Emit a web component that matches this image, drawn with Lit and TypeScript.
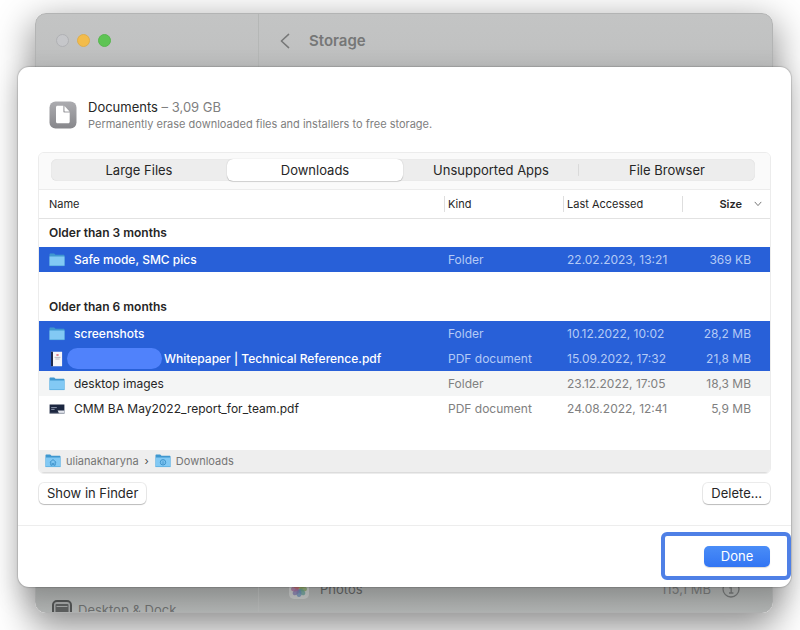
import { LitElement, html, css, svg, nothing } from "lit";
import { customElement, state } from "lit/decorators.js";
import { classMap } from "lit/directives/class-map.js";

type IconName = "folder" | "paper" | "slide";

interface FileItem {
  id: string;
  name: string;
  icon: IconName;
  kind: string;
  accessed: string;
  size: string;
  redacted?: boolean;
}

interface Group {
  title: string;
  items: FileItem[];
}

const TABS = ["Large Files", "Downloads", "Unsupported Apps", "File Browser"];

const GROUPS: Group[] = [
  {
    title: "Older than 3 months",
    items: [
      { id: "safe", name: "Safe mode, SMC pics", icon: "folder", kind: "Folder", accessed: "22.02.2023, 13:21", size: "369 KB" },
    ],
  },
  {
    title: "Older than 6 months",
    items: [
      { id: "shots", name: "screenshots", icon: "folder", kind: "Folder", accessed: "10.12.2022, 10:02", size: "28,2 MB" },
      { id: "white", name: "Whitepaper | Technical Reference.pdf", icon: "paper", kind: "PDF document", accessed: "15.09.2022, 17:32", size: "21,8 MB", redacted: true },
      { id: "desk", name: "desktop images", icon: "folder", kind: "Folder", accessed: "23.12.2022, 17:05", size: "18,3 MB" },
      { id: "cmm", name: "CMM BA May2022_report_for_team.pdf", icon: "slide", kind: "PDF document", accessed: "24.08.2022, 12:41", size: "5,9 MB" },
    ],
  },
];

const folder = (mark: unknown = nothing) => html`
  <svg class="icon" width="16" height="16" viewBox="0 0 16 16" aria-hidden="true">
    <path d="M.5 2.6c0-.6.4-1 1-1h3.7l1.3 1.2h8c.6 0 1 .4 1 1V13c0 .6-.4 1-1 1h-13c-.6 0-1-.4-1-1z" fill="#3f97cf" />
    <path d="M.5 4.6h15V13c0 .6-.4 1-1 1h-13c-.6 0-1-.4-1-1z" fill="#82c9f4" />
    <path d="M.6 13.6h14.8" stroke="#5aaee0" stroke-width=".8" />
    ${mark}
  </svg>
`;

const homeMark = svg`<path d="M4.8 9.4 8 6.6l3.2 2.8M5.8 9v3.2h1.5v-1.8h1.4v1.8h1.5V9" fill="none" stroke="#3f93cb" stroke-width="1" />`;
const downMark = svg`<circle cx="8" cy="9.3" r="2.7" fill="none" stroke="#3f93cb" stroke-width="1" /><path d="M8 7.8v2.6M7 9.6l1 1 1-1" fill="none" stroke="#3f93cb" stroke-width=".8" />`;

const paper = html`
  <svg class="icon" width="16" height="16" viewBox="0 0 16 16" aria-hidden="true">
    <path d="M2.2.8h10.9v14.4H2.2z" fill="#f7f6f8" />
    <path d="M2 .8h2v14.4H2z" fill="#1f2a4c" />
    <path d="M7.4 3.2h2.2v1.6H7.4z" fill="#d5606e" />
    <path d="M5.6 6.4h5.8M6.4 8h4.2" stroke="#a9abb8" stroke-width=".8" />
  </svg>
`;

const slide = html`
  <svg class="icon" width="16" height="16" viewBox="0 0 16 16" aria-hidden="true">
    <path d="M.6 3.5h14.8v9H.6z" fill="#1c2740" />
    <path d="M10 12.5 8.6 9.6h6.8v2.9z" fill="#e4e7ee" />
    <path d="M2.2 6.6h5.6M2.2 8.4h3.4" stroke="#9aa3b8" stroke-width=".9" />
    <path d="M.6 12.2h14.8" stroke="#8a90a0" stroke-width=".6" />
  </svg>
`;

const ICONS = { folder: folder(), paper, slide };

const PETALS = ["#c98f5c", "#b5a85a", "#7f9f62", "#5f9a90", "#6487b0", "#7c74a8", "#a06a96", "#bd6a68"];

@customElement("settings-window")
export class SettingsWindow extends LitElement {
  static styles = css`
    :host {
      display: grid;
      grid-template-columns: 223px 1fr;
      box-sizing: border-box;
      overflow: hidden;
      border-radius: 11px;
      border: 1px solid #b3b4b4;
      color: #6e6f6f;
      background: linear-gradient(#c3c4c4 0, #c1c2c2 30px, #bcbdbd 54px, #a8aaa9 570px, #b2b5b4 100%);
      box-shadow: 0 12px 36px 4px rgba(0, 0, 0, 0.42);
    }
    .side,
    .main {
      display: flex;
      flex-direction: column;
      justify-content: space-between;
    }
    .side {
      border-right: 1px solid #b5b7b6;
    }
    .lights {
      display: flex;
      gap: 8px;
      padding: 20px;
    }
    .light {
      width: 13px;
      height: 13px;
      box-sizing: border-box;
      padding: 0;
      border-radius: 50%;
      border: 1px solid #b0b1b4;
      background: #c6c7ca;
    }
    .min {
      background: #f3bc4b;
      border-color: #dfae4c;
    }
    .max {
      background: #5ec454;
      border-color: #58b64f;
    }
    .item {
      display: flex;
      align-items: center;
      gap: 6px;
      height: 16px;
      padding-left: 16px;
      font-size: 13px;
      line-height: 16px;
      color: #6e7070;
    }
    .item svg {
      flex: none;
    }
    .side .item {
      margin-bottom: -6px;
    }
    .bar {
      display: flex;
      align-items: center;
      gap: 19px;
      height: 53px;
      padding-left: 21px;
    }
    .back {
      display: flex;
      padding: 0;
      border: 0;
      background: none;
    }
    h1 {
      margin: 0;
      font-size: 15px;
      line-height: 20px;
      font-weight: 600;
      color: #767777;
    }
    .photos {
      display: flex;
      align-items: center;
      gap: 11px;
      height: 20px;
      margin: 0 20px 13px;
      padding: 0 12px 0 10px;
      font-size: 13px;
      line-height: 16px;
      color: #606262;
    }
    .photos .amount {
      margin-left: auto;
      color: #777979;
    }
  `;

  render() {
    return html`
      <div class="side">
        <div class="lights">
          <button class="light" aria-label="Close"></button>
          <button class="light min" aria-label="Minimize"></button>
          <button class="light max" aria-label="Zoom"></button>
        </div>
        <div class="item">
          <svg width="20" height="20" viewBox="0 0 20 20" aria-hidden="true">
            <rect x="1" y="1" width="18" height="18" rx="4" fill="#a4a6a6" stroke="#525454" stroke-width="2" />
            <rect x="3.5" y="4" width="13" height="12" rx="1" fill="#5e6060" />
            <path d="M4.5 6.5h11" stroke="#a4a6a6" />
          </svg>
          <span>Desktop &amp; Dock</span>
        </div>
      </div>
      <div class="main">
        <div class="bar">
          <button class="back" aria-label="Back">
            <svg width="10" height="16" viewBox="0 0 10 16" fill="none" stroke="#777878" stroke-width="1.5" stroke-linecap="round" stroke-linejoin="round" aria-hidden="true">
              <path d="M8.6 1.4 1.4 8l7.2 6.6" />
            </svg>
          </button>
          <h1>Storage</h1>
        </div>
        <div class="photos">
          <svg width="20" height="20" viewBox="0 0 20 20" aria-hidden="true">
            <rect width="20" height="20" rx="5" fill="#c2c4c3" />
            ${PETALS.map(
              (c, i) => svg`<ellipse cx="10" cy="5.8" rx="2.5" ry="3.8" fill=${c} opacity=".75" transform=${`rotate(${i * 45} 10 10)`} />`
            )}
          </svg>
          <span>Photos</span>
          <span class="amount">115,1 MB</span>
          <svg width="18" height="18" viewBox="0 0 18 18" fill="none" stroke="#747676" stroke-width="1.3" aria-hidden="true">
            <circle cx="9" cy="9" r="8" />
            <path d="M7.3 7.8H9.2v5M7 13h4.4M9 4.6v1.4" />
          </svg>
        </div>
      </div>
    `;
  }
}

@customElement("storage-sheet")
export class StorageSheet extends LitElement {
  @state() private tab = 1;
  @state() private selected = new Set(["safe", "shots", "white"]);

  static styles = css`
    :host {
      display: flex;
      flex-direction: column;
      box-sizing: border-box;
      border-radius: 11px;
      background: #fff;
      box-shadow: 0 0 1px 1px rgba(0, 0, 0, 0.14), 0 10px 28px rgba(0, 0, 0, 0.2);
      color: #262626;
    }
    button {
      font: inherit;
      color: inherit;
    }
    header {
      display: flex;
      align-items: center;
      gap: 11px;
      padding: 31px 31px 20px;
    }
    h2,
    p {
      margin: 0;
      font-size: 13px;
      line-height: 18px;
      font-weight: 400;
    }
    p {
      font-size: 11px;
      line-height: 16px;
      color: #808080;
    }
    h2 span {
      color: #808080;
    }
    .panel {
      flex: 1;
      display: flex;
      flex-direction: column;
      margin: 0 20px;
      border: 1px solid #ececec;
      border-radius: 6px;
      overflow: hidden;
    }
    .tabs {
      background: #fafafa;
      border-bottom: 1px solid #ececec;
      padding: 6px 15px 8px 12px;
    }
    .segments {
      display: grid;
      grid-template-columns: repeat(4, 1fr);
      border-radius: 6px;
      background: #ededed;
      box-shadow: inset 0 0 1px rgba(0, 0, 0, 0.15);
    }
    .segment {
      height: 22px;
      padding: 0;
      border: 0;
      border-radius: 6px;
      background: none;
      font-size: 13px;
      line-height: 22px;
    }
    .segment.divided {
      background: linear-gradient(#dadada, #dadada) right center / 1px 12px no-repeat;
    }
    .segment.on {
      background: #fff;
      box-shadow: 0 0 1px rgba(0, 0, 0, 0.25), 0 1px 1px rgba(0, 0, 0, 0.15);
    }
    table {
      width: 100%;
      table-layout: fixed;
      border-collapse: separate;
      border-spacing: 0;
      font-size: 12px;
      line-height: 16px;
    }
    th,
    td {
      box-sizing: border-box;
      padding: 0 0 0 4px;
      text-align: left;
      font-weight: 400;
      white-space: nowrap;
    }
    th.head {
      height: 29px;
      font-size: 11px;
      border-bottom: 1px solid #e2e2e2;
      background: linear-gradient(#dedede, #dedede) left center / 1px 16px no-repeat;
    }
    th.head:first-child {
      padding-left: 10px;
      background: none;
    }
    .kind {
      width: 119px;
    }
    .accessed {
      width: 119px;
    }
    .size {
      width: 88px;
    }
    .sort {
      display: flex;
      align-items: center;
      justify-content: flex-end;
      gap: 12px;
      width: 100%;
      padding: 0 8px 0 0;
      border: 0;
      background: none;
      font-weight: 600;
    }
    th.group {
      height: 28px;
      padding-left: 10px;
      font-size: 12px;
      font-weight: 600;
    }
    .spacer td {
      height: 21px;
    }
    .row td {
      height: 25px;
      color: #808080;
    }
    .row td:first-child {
      padding-left: 10px;
      color: #262626;
    }
    .row td:last-child {
      padding-right: 19px;
      text-align: right;
    }
    .alt td {
      background: #f4f5f5;
    }
    .selected td {
      background: #2860d8;
      color: #b4caf6;
    }
    .selected td:first-child {
      color: #fff;
      font-weight: 500;
    }
    .file {
      display: flex;
      align-items: center;
      gap: 9px;
    }
    .file.tight {
      gap: 2px;
    }
    .icon {
      flex: none;
      display: block;
    }
    .redaction {
      width: 95px;
      height: 21px;
      border-radius: 11px;
      background: #5082fb;
    }
    nav {
      display: flex;
      align-items: center;
      gap: 6px;
      height: 22px;
      margin-top: auto;
      padding-left: 6px;
      background: #eeeeee;
      border-bottom: 1px solid #dcdcdc;
      font-size: 11px;
      line-height: 16px;
      color: #4c4c4c;
    }
    nav a {
      display: flex;
      align-items: center;
      gap: 5px;
      color: #757575;
      text-decoration: none;
    }
    .actions {
      display: flex;
      justify-content: space-between;
      padding: 9px 21px 21px;
    }
    .push {
      height: 21px;
      padding: 0 8px;
      border: 0;
      border-radius: 5px;
      background: #fff;
      font-size: 13px;
      line-height: 21px;
      box-shadow: 0 0 0 1px rgba(0, 0, 0, 0.08), 0 1px 1px rgba(0, 0, 0, 0.2);
    }
    footer {
      display: flex;
      justify-content: flex-end;
      padding: 6px 0 7px;
      border-top: 1px solid #ededed;
    }
    .callout {
      display: flex;
      align-items: center;
      justify-content: flex-end;
      box-sizing: border-box;
      width: 130px;
      height: 48px;
      padding-right: 17px;
      border: 4px solid #4f80e6;
      border-radius: 6px;
    }
    .done {
      width: 66px;
      height: 21px;
      padding: 0;
      border: 0;
      border-radius: 5px;
      background: linear-gradient(#4a8df7, #3275f3);
      color: #fff;
      font-size: 13px;
      line-height: 21px;
      box-shadow: 0 1px 1px rgba(0, 0, 0, 0.15);
    }
  `;

  private toggle(id: string) {
    const next = new Set(this.selected);
    if (!next.delete(id)) next.add(id);
    this.selected = next;
  }

  private row(item: FileItem, index: number) {
    const selected = this.selected.has(item.id);
    return html`
      <tr
        class=${classMap({ row: true, alt: index % 2 === 0, selected })}
        aria-selected=${selected ? "true" : "false"}
        @click=${() => this.toggle(item.id)}
      >
        <td>
          <div class=${classMap({ file: true, tight: !!item.redacted })}>
            ${ICONS[item.icon]}${item.redacted ? html`<span class="redaction"></span>` : nothing}
            <span>${item.name}</span>
          </div>
        </td>
        <td>${item.kind}</td>
        <td>${item.accessed}</td>
        <td>${item.size}</td>
      </tr>
    `;
  }

  render() {
    return html`
      <header>
        <svg width="28" height="28" viewBox="0 0 28 28" aria-hidden="true">
          <defs>
            <linearGradient id="tile" x1="0" y1="0" x2="0" y2="1">
              <stop offset="0" stop-color="#acacb0" />
              <stop offset="1" stop-color="#87878b" />
            </linearGradient>
          </defs>
          <rect x=".5" y=".5" width="27" height="27" rx="6" fill="url(#tile)" />
          <path d="M8.5 4.8h5.8v5.6c0 .7.5 1.2 1.2 1.2h5.2v9.2c0 .9-.6 1.5-1.5 1.5H8.5c-.9 0-1.5-.6-1.5-1.5V6.3c0-.9.6-1.5 1.5-1.5z" fill="#fff" />
          <path d="M15.5 5v4.7c0 .4.3.7.7.7h4.4z" fill="#fff" />
        </svg>
        <div>
          <h2>Documents <span>– 3,09 GB</span></h2>
          <p>Permanently erase downloaded files and installers to free storage.</p>
        </div>
      </header>

      <div class="panel">
        <div class="tabs">
          <div class="segments">
            ${TABS.map(
              (label, i) => html`
                <button
                  class=${classMap({
                    segment: true,
                    on: i === this.tab,
                    divided: i < TABS.length - 1 && i !== this.tab && i + 1 !== this.tab,
                  })}
                  aria-pressed=${i === this.tab ? "true" : "false"}
                  @click=${() => (this.tab = i)}
                >${label}</button>
              `
            )}
          </div>
        </div>

        <table>
          <thead>
            <tr>
              <th class="head" scope="col">Name</th>
              <th class="head kind" scope="col">Kind</th>
              <th class="head accessed" scope="col">Last Accessed</th>
              <th class="head size" scope="col" aria-sort="descending">
                <button class="sort">
                  Size
                  <svg width="8" height="6" viewBox="0 0 8 6" fill="none" stroke="#777" stroke-linecap="round" stroke-linejoin="round" aria-hidden="true">
                    <path d="M1 1.2 4 4.6l3-3.4" />
                  </svg>
                </button>
              </th>
            </tr>
          </thead>
          ${GROUPS.map(
            (group, g) => html`
              <tbody>
                ${g ? html`<tr class="spacer"><td colspan="4"></td></tr>` : nothing}
                <tr><th class="group" colspan="4" scope="rowgroup">${group.title}</th></tr>
                ${group.items.map((item, i) => this.row(item, i))}
              </tbody>
            `
          )}
        </table>

        <nav aria-label="Path">
          <a href="#home">${folder(homeMark)}<span>ulianakharyna</span></a>
          <span>›</span>
          <a href="#downloads">${folder(downMark)}<span>Downloads</span></a>
        </nav>
      </div>

      <div class="actions">
        <button class="push">Show in Finder</button>
        <button class="push">Delete...</button>
      </div>

      <footer>
        <div class="callout"><button class="done">Done</button></div>
      </footer>
    `;
  }
}

@customElement("app-root")
export class AppRoot extends LitElement {
  static styles = css`
    :host {
      display: grid;
      box-sizing: border-box;
      min-height: 100vh;
      overflow: hidden;
      background: #fff;
      font-family: Inter, "Liberation Sans", sans-serif;
    }
    settings-window,
    storage-sheet {
      grid-area: 1 / 1;
    }
    settings-window {
      margin: 13px 27px 17px 35px;
    }
    storage-sheet {
      margin: 67px 9px 43px 18px;
    }
  `;

  render() {
    return html`
      <settings-window></settings-window>
      <storage-sheet></storage-sheet>
    `;
  }
}
